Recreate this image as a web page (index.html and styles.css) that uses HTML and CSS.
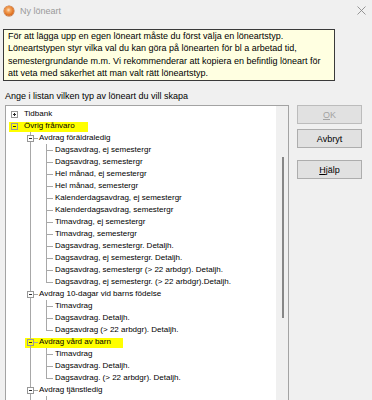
FILE: index.html
```html
<!DOCTYPE html>
<html lang="sv">
<head>
<meta charset="utf-8">
<title>Ny löneart</title>
<link rel="stylesheet" href="styles.css">
</head>
<body>
<div class="titlebar">
  <span class="app-icon"></span>
  <span class="title">Ny löneart</span>
  <svg class="close" width="9" height="9" viewBox="0 0 9 9"><path d="M0.5 0.5 L8.5 8.5 M8.5 0.5 L0.5 8.5" stroke="#8a8a8a" stroke-width="0.9" fill="none"/></svg>
</div>
<div class="info">För att lägga upp en egen löneart måste du först välja en löneartstyp.<br>Löneartstypen styr vilka val du kan göra på lönearten för bl a arbetad tid,<br>semestergrundande m.m. Vi rekommenderar att kopiera en befintlig löneart för<br>att veta med säkerhet att man valt rätt löneartstyp.</div>
<div class="label">Ange i listan vilken typ av löneart du vill skapa</div>
<div class="main">
  <div class="tree">
    <div class="tree-list">
      <div class="row"><span class="c"><span class="box plus"></span></span><span class="tx tx0">Tidbank</span></div>
      <div class="row hl0"><span class="c"><span class="box"></span></span><span class="tx tx0">Övrig frånvaro</span></div>
      <div class="row"><span class="c"></span><span class="c xt"><span class="box"></span></span><span class="tx">Avdrag föräldraledig</span></div>
      <div class="row"><span class="c"></span><span class="c v"></span><span class="c t"></span><span class="tx">Dagsavdrag, ej semestergr</span></div>
      <div class="row"><span class="c"></span><span class="c v"></span><span class="c t"></span><span class="tx">Dagsavdrag, semestergr</span></div>
      <div class="row"><span class="c"></span><span class="c v"></span><span class="c t"></span><span class="tx">Hel månad, ej semestergr</span></div>
      <div class="row"><span class="c"></span><span class="c v"></span><span class="c t"></span><span class="tx">Hel månad, semestergr</span></div>
      <div class="row"><span class="c"></span><span class="c v"></span><span class="c t"></span><span class="tx">Kalenderdagsavdrag, ej semestergr</span></div>
      <div class="row"><span class="c"></span><span class="c v"></span><span class="c t"></span><span class="tx">Kalenderdagsavdrag, semestergr</span></div>
      <div class="row"><span class="c"></span><span class="c v"></span><span class="c t"></span><span class="tx">Timavdrag, ej semestergr</span></div>
      <div class="row"><span class="c"></span><span class="c v"></span><span class="c t"></span><span class="tx">Timavdrag, semestergr</span></div>
      <div class="row"><span class="c"></span><span class="c v"></span><span class="c t"></span><span class="tx">Dagsavdrag, semestergr. Detaljh.</span></div>
      <div class="row"><span class="c"></span><span class="c v"></span><span class="c t"></span><span class="tx">Dagsavdrag, ej semestergr. Detaljh.</span></div>
      <div class="row"><span class="c"></span><span class="c v"></span><span class="c t"></span><span class="tx">Dagsavdrag, semestergr (&gt; 22 arbdgr). Detaljh.</span></div>
      <div class="row"><span class="c"></span><span class="c v"></span><span class="c l"></span><span class="tx">Dagsavdrag, ej semestergr. (&gt; 22 arbdgr).Detaljh.</span></div>
      <div class="row"><span class="c"></span><span class="c xt"><span class="box"></span></span><span class="tx">Avdrag 10-dagar vid barns födelse</span></div>
      <div class="row"><span class="c"></span><span class="c v"></span><span class="c t"></span><span class="tx">Timavdrag</span></div>
      <div class="row"><span class="c"></span><span class="c v"></span><span class="c t"></span><span class="tx">Dagsavdrag. Detaljh.</span></div>
      <div class="row"><span class="c"></span><span class="c v"></span><span class="c l"></span><span class="tx">Dagsavdrag (&gt; 22 arbdgr). Detaljh.</span></div>
      <div class="row hl1"><span class="c"></span><span class="c xt"><span class="box"></span></span><span class="tx">Avdrag vård av barn</span></div>
      <div class="row"><span class="c"></span><span class="c v"></span><span class="c t"></span><span class="tx">Timavdrag</span></div>
      <div class="row"><span class="c"></span><span class="c v"></span><span class="c t"></span><span class="tx">Dagsavdrag. Detaljh.</span></div>
      <div class="row"><span class="c"></span><span class="c v"></span><span class="c l"></span><span class="tx">Dagsavdrag. (&gt; 22 arbdgr). Detaljh.</span></div>
      <div class="row"><span class="c"></span><span class="c xt"><span class="box"></span></span><span class="tx">Avdrag tjänstledig</span></div>
      <div class="row"><span class="c"></span><span class="c v"></span><span class="c t"></span></div>
    </div>
    <div class="vscroll"><div class="thumb"></div></div>
  </div>
  <div class="buttons">
    <div class="btn disabled"><span><u>O</u>K</span></div>
    <div class="btn">Avbryt</div>
    <div class="btn gap"><span><u>H</u>jälp</span></div>
  </div>
</div>
</body>
</html>
```
FILE: styles.css
```css
html, body {
  margin: 0;
  padding: 0;
}
body {
  width: 372px;
  height: 400px;
  overflow: hidden;
  background: #f0f0f0;
  font-family: "Liberation Sans", Arial, sans-serif;
  color: #000;
}
.titlebar {
  height: 21px;
  display: flex;
  align-items: center;
  padding: 0 6px 0 4px;
}
.app-icon {
  width: 10px;
  height: 10px;
  border-radius: 50%;
  background: radial-gradient(circle at 45% 40%, #fbe3c8 0, #f4a45c 25%, #e07424 60%, #c4581a 100%);
  box-shadow: 0 0 0 0.5px #b8622a;
}
.title {
  flex: 1;
  margin-left: 6px;
  font-size: 9px;
  color: #9a9a9a;
}
.close {
  display: block;
}
.info {
  margin: 8px 0 0 3px;
  width: 332px;
  box-sizing: border-box;
  border: 1px solid #3a3a3a;
  background: #ffffe1;
  padding: 0 4px 1px 4px;
  font-size: 9px;
  line-height: 12.33px;
  white-space: nowrap;
}
.label {
  margin: 9px 0 0 5px;
  font-size: 9px;
  line-height: 12px;
  white-space: nowrap;
}
.main {
  display: flex;
  align-items: flex-start;
  margin-top: 3px;
  padding-left: 5px;
}
.tree {
  width: 284px;
  height: 300px;
  box-sizing: border-box;
  border: 1px solid #a3a3a3;
  background: #fff;
  display: flex;
}
.tree-list {
  flex: 1;
  padding-top: 2px;
  font-size: 8px;
  line-height: 12px;
  overflow: hidden;
}
.vscroll {
  width: 12px;
  flex: none;
  box-sizing: border-box;
  background: #f0f0f0;
  padding: 51px 0 0 6px;
}
.thumb {
  width: 2px;
  height: 161px;
  background: #878787;
}
.row {
  display: flex;
  height: 12px;
  white-space: nowrap;
}
.hl0 {
  background: linear-gradient(#ffff00, #ffff00) 3px 2px / 79px 10px no-repeat;
}
.hl1 {
  background: linear-gradient(#ffff00, #ffff00) 19px 2px / 98px 10px no-repeat;
}
.c {
  display: block;
  flex: none;
  width: 16px;
  height: 12px;
}
.box {
  display: block;
  width: 7px;
  height: 7px;
  box-sizing: border-box;
  margin: 3px 0 0 5px;
  border: 1px solid #979797;
  background: linear-gradient(#2b2b2b, #2b2b2b) 1px 2px / 3px 1px no-repeat;
}
.box.plus {
  background:
    linear-gradient(#2b2b2b, #2b2b2b) 1px 2px / 3px 1px no-repeat,
    linear-gradient(#2b2b2b, #2b2b2b) 2px 1px / 1px 3px no-repeat;
}
.v {
  background: linear-gradient(#a8a8a8, #a8a8a8) 8px 0 / 1px 12px no-repeat;
}
.t {
  background:
    linear-gradient(#a8a8a8, #a8a8a8) 8px 0 / 1px 12px no-repeat,
    linear-gradient(#a8a8a8, #a8a8a8) 9px 6px / 6px 1px no-repeat;
}
.l {
  background:
    linear-gradient(#a8a8a8, #a8a8a8) 8px 0 / 1px 7px no-repeat,
    linear-gradient(#a8a8a8, #a8a8a8) 9px 6px / 6px 1px no-repeat;
}
.xt {
  background:
    linear-gradient(#a8a8a8, #a8a8a8) 8px 0 / 1px 3px no-repeat,
    linear-gradient(#a8a8a8, #a8a8a8) 8px 10px / 1px 2px no-repeat,
    linear-gradient(#a8a8a8, #a8a8a8) 12px 6px / 4px 1px no-repeat;
}
.tx {
  padding-left: 1px;
}
.tx0 {
  padding-left: 2px;
}
.buttons {
  display: flex;
  flex-direction: column;
  margin-left: 8px;
}
.btn {
  width: 65px;
  height: 19px;
  box-sizing: border-box;
  border: 1px solid #adadad;
  background: #e1e1e1;
  font-size: 9px;
  display: flex;
  align-items: center;
  justify-content: center;
}
.btn + .btn {
  margin-top: 5px;
}
.btn.gap {
  margin-top: 12px;
}
.btn.disabled {
  color: #a3a3a3;
  border-color: #bcbcbc;
}
```
